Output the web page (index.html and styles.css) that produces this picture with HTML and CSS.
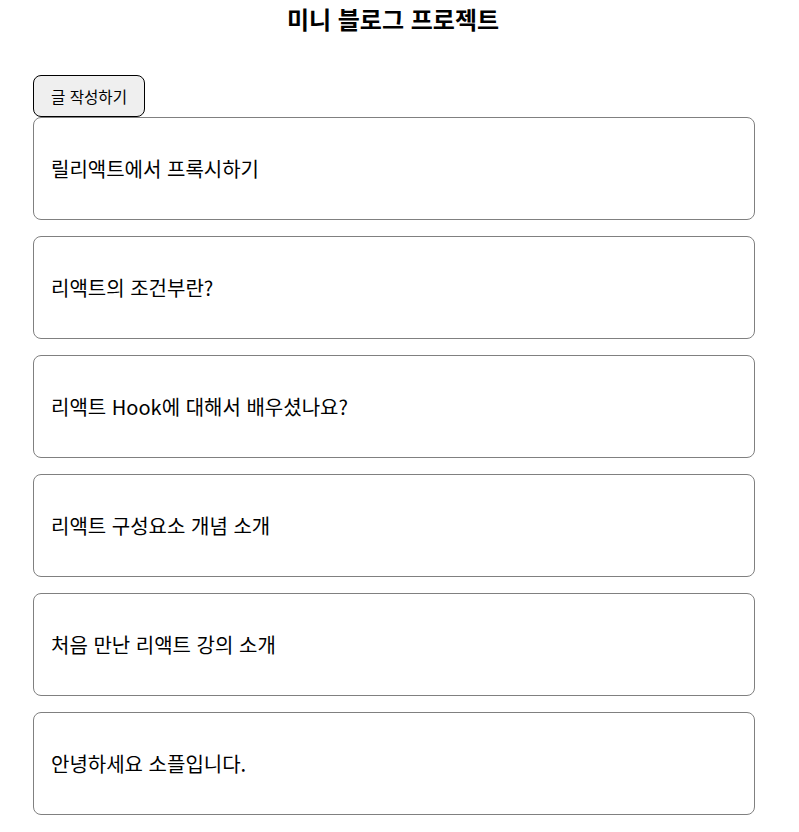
FILE: index.html
```html
<!DOCTYPE html>
<html lang="ko">
<head>
  <meta charset="UTF-8">
  <meta name="viewport" content="width=device-width, initial-scale=1.0">
  <title>미니 블로그</title>
  <link rel="stylesheet" href="styles.css">
</head>
<body>
  <header class="title-bar">
    <h1>미니 블로그 프로젝트</h1>
  </header>
  <main class="page">
    <div class="container">
      <button class="write-button">글 작성하기</button>
      <!-- Post list -->
      <div class="post-list">
        <div class="post-item"><p class="post-title">릴리액트에서 프록시하기</p></div>
        <div class="post-item"><p class="post-title">리액트의 조건부란?</p></div>
        <div class="post-item"><p class="post-title">리액트 Hook에 대해서 배우셨나요?</p></div>
        <div class="post-item"><p class="post-title">리액트 구성요소 개념 소개</p></div>
        <div class="post-item"><p class="post-title">처음 만난 리액트 강의 소개</p></div>
        <div class="post-item"><p class="post-title">안녕하세요 소플입니다.</p></div>
      </div>
    </div>
  </main>
</body>
</html>
```

FILE: styles.css
```css
body {
  margin: 8px;
  font-family: "Noto Sans CJK KR", "Noto Sans", sans-serif;
  color: #000;
  background-color: #fff;
}
.title-bar {
  width: 770px;
  text-align: center;
}
h1 {
  margin: 0;
  font-size: 24px;
  font-weight: bold;
  line-height: 22px;
}
.page {
  padding: 45px 0 0 25px;
}
.container {
  width: 722px;
  display: flex;
  flex-direction: column;
  align-items: flex-start;
}
.write-button {
  height: 42px;
  width: 112px;
  padding: 0;
  font-family: inherit;
  font-size: 15.6px;
  background-color: #efefef;
  border: 1px solid #000;
  border-radius: 8px;
  color: #000;
  cursor: pointer;
}
.post-list {
  width: 100%;
  display: flex;
  flex-direction: column;
  gap: 16px;
}
.post-item {
  box-sizing: border-box;
  height: 103px;
  padding: 0 17px;
  border: 1px solid #808080;
  border-radius: 8px;
  display: flex;
  align-items: center;
  cursor: pointer;
}
.post-title {
  margin: 0;
  font-size: 20px;
  font-weight: 400;
}
```
